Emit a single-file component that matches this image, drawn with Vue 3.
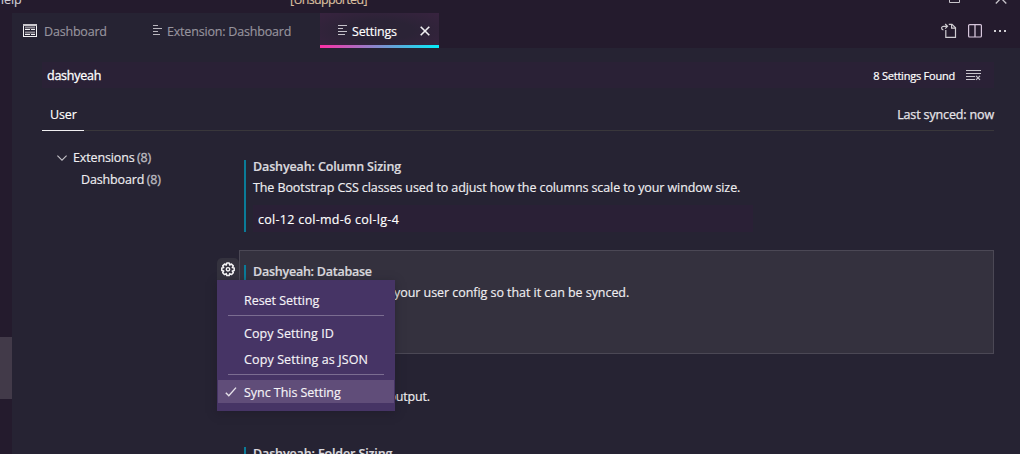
<script setup>
const tree = [
  { label: 'Extensions', count: '(8)', depth: 0 },
  { label: 'Dashboard', count: '(8)', depth: 1 },
]
</script>

<template>
  <div class="window">
    <header class="titlebar">
      <span class="help">Help</span>
      <span class="apptitle">[Unsupported]</span>
      <svg class="controls" width="70" height="13" viewBox="0 0 70 13" fill="none" stroke="#c8c5cb">
        <path d="M9.5 -5.5h10v8h-10z" />
        <path d="M55.8 3.5L66 -7M56 -7L66.3 3.5" stroke-width="1.3" />
      </svg>
    </header>
    <div class="body">
      <aside class="activity"><div class="marker"></div></aside>
      <main class="main">
        <nav class="tabs">
          <div class="tab t1">
            <svg width="14" height="13" viewBox="0 0 14 13">
              <rect x=".5" y=".5" width="13" height="12" fill="none" stroke="#f2f1f3" />
              <path d="M0 1h14" stroke="#cac8cd" stroke-width="2" />
              <path d="M2 3.5h10M2 8.5h10" stroke="#8d8a93" stroke-width="2" />
              <path d="M2 5.5h5M8 5.5h4M2 10.5h5M8 10.5h4" stroke="#f2f1f3" />
            </svg>
            <span>Dashboard</span>
          </div>
          <div class="tab t2">
            <svg class="lines" width="10" height="10" viewBox="0 0 10 10" stroke="#b9b6be" stroke-width="1.2">
              <path d="M1 .5h5M1 3.5h9M1 6.5h5M1 9.5h7" />
            </svg>
            <span>Extension: Dashboard</span>
          </div>
          <div class="tab t3">
            <svg class="lines" width="10" height="10" viewBox="0 0 10 10" stroke="#c5c2ca" stroke-width="1.2">
              <path d="M0 .5h9M0 3.5h5M0 6.5h9M0 9.5h7" />
            </svg>
            <span>Settings</span>
            <svg class="close" width="10" height="10" viewBox="0 0 10 10" stroke="#f0eff1" stroke-width="1.6">
              <path d="M.7 .7l8.6 8.6M9.3 .7L.7 9.3" />
            </svg>
          </div>
          <div class="actions">
            <svg width="16" height="16" viewBox="0 0 16 16" fill="none" stroke="#cfcdd2" stroke-width="1.2">
              <path d="M4.8 7v7.4h9.7V4.8L11 1.4H7.8" />
              <path d="M10.6 1.5v3.7h3.9" />
              <path d="M2.4 6.8C1 6.6 .6 5.8 .6 5s.8-1.7 2-1.7h3.6M4.2 1l2.3 2.3-2.3 2.3" />
            </svg>
            <svg class="split" width="14" height="14" viewBox="0 0 14 14" fill="none" stroke="#d6c6dc">
              <rect x=".6" y=".6" width="12.8" height="12.4" rx="1" stroke-width="1.2" /><path d="M7 .5v12.5" stroke-width="1.3" />
            </svg>
            <svg class="dots" width="14" height="4" viewBox="0 0 14 4" fill="#cfcdd2">
              <rect x="1" y="1" width="2" height="2" /><rect x="6" y="1" width="2" height="2" /><rect x="11" y="1" width="2" height="2" />
            </svg>
          </div>
        </nav>

        <div class="search">
          <span class="query">dashyeah</span>
          <span class="found">8 Settings Found</span>
          <svg width="15" height="12" viewBox="0 0 15 12" stroke="#c9c6cd" fill="none">
            <path d="M0 1.5h15M0 4.5h15M0 7.5h9M0 10.5h9" />
            <path d="M10 6.8l4 4M14 6.8l-4 4" stroke-width="1.2" />
          </svg>
        </div>

        <div class="scope">
          <span class="user">User</span>
          <span class="synced">Last synced: now</span>
        </div>

        <div class="content">
          <div class="tree">
            <div v-for="n in tree" :key="n.label" :class="['node', 'd' + n.depth]">
              <svg v-if="!n.depth" width="10" height="6" viewBox="0 0 10 6" fill="none" stroke="#c5c3c9" stroke-width="1.1">
                <path d="M.4 .6L5 5.2 9.6 .6" />
              </svg>
              <span>{{ n.label }}</span><b>{{ n.count }}</b>
            </div>
          </div>
          <div class="settings">
            <section class="item first">
              <div class="mod">
                <h3>Dashyeah: Column Sizing</h3>
                <p class="d1t">The Bootstrap CSS classes used to adjust how the columns scale to your window size.</p>
                <div class="field">col-12 col-md-6 col-lg-4</div>
              </div>
            </section>
            <section class="item focused">
              <div class="mod">
                <h3>Dashyeah: Database</h3>
                <p class="d2t">your user config so that it can be synced.</p>
              </div>
              <div class="gear">
                <svg width="16" height="16" viewBox="0 0 16 16" fill="none" stroke="#f5f4f6">
                  <path stroke-width="1.5" stroke-linejoin="round" d="M6.8 1.1h2.4l.5 1.9 1.7-1 1.9 1.9-1 1.7 1.9.5v2.4l-1.9.5 1 1.7-1.9 1.9-1.7-1-.5 1.9H6.8l-.5-1.9-1.7 1-1.9-1.9 1-1.7-1.9-.5V6.1l1.9-.5-1-1.7L4.6 2l1.7 1z" />
                  <circle cx="8" cy="7.3" r="1.7" stroke-width="1.4" />
                </svg>
              </div>
              <div class="menu">
                <div class="opt">Reset Setting</div>
                <hr />
                <div class="opt copyid">Copy Setting ID</div>
                <div class="opt json">Copy Setting as JSON</div>
                <hr />
                <div class="opt on">
                  <svg width="12" height="10" viewBox="0 0 12 10" fill="none" stroke="#e6e1ea" stroke-width="1.4"><path d="M.8 5.8l3 3L11 .6" /></svg>
                  <span>Sync This Setting</span>
                </div>
              </div>
            </section>
            <p class="d3t">output.</p>
            <section class="item last">
              <div class="mod"><h3>Dashyeah: Folder Sizing</h3></div>
            </section>
          </div>
        </div>
      </main>
    </div>
  </div>
</template>

<style>
html, body { margin: 0; background: #262333; overflow: hidden; }
</style>

<style scoped>
* { box-sizing: border-box; }
svg { display: block; flex: none; overflow: visible; }
h3, p { margin: 0; }
.window { width: 1020px; height: 454px; overflow: hidden; background: #262333; color: #efeef1; font: 12.5px/18px "Open Sans", "Noto Sans", sans-serif; letter-spacing: -.14px; -webkit-text-stroke: .15px; white-space: nowrap; display: flex; flex-direction: column; }
.titlebar { height: 13px; flex: none; background: #241b2d; display: flex; overflow: hidden; color: #cfccd3; }
.titlebar span { margin-top: -9px; }
.help { margin-left: -5px; width: 295px; }
.apptitle { color: #d9bf9f; letter-spacing: -.68px; width: 650px; }
.body { display: flex; flex: 1; min-height: 0; }
.activity { width: 12px; background: #241b2d; padding-top: 324px; }
.marker { height: 62px; background: #423a49; }
.main { flex: 1; min-width: 0; }
.tabs { height: 35px; display: flex; background: #241b2d; }
.tab { display: flex; align-items: center; background: #262333; color: #97949e; }
.tab span { margin-top: 2px; letter-spacing: -.19px; }
.t1 { width: 126px; padding-left: 11px; gap: 7px; }
.t1 svg { margin-top: -1px; }
.t2 { width: 182px; padding-left: 14px; gap: 5px; }
.lines { margin-top: -1px; }
.t3 { width: 119px; padding-left: 18px; gap: 4px; color: #fff; background: linear-gradient(90deg, #ff2ea6, #03edf9) bottom / 100% 3px no-repeat, radial-gradient(ellipse at center, #2b2336 40%, #38233f 100%); }
.close { margin-left: auto; margin-right: 9px; margin-top: 1px; }
.actions { margin-left: auto; display: flex; align-items: center; padding-right: 13px; }
.split { margin-left: 11px; }
.dots { margin-left: 11px; }
.search { margin: 14px 26px 0 30px; height: 26px; background: #2a2136; display: flex; align-items: center; padding: 0 13px 0 5px; color: #fff; }
.query { flex: 1; letter-spacing: -.24px; padding-top: 2px; -webkit-text-stroke: .3px; }
.found { font-size: 11px; letter-spacing: -.22px; margin-right: 11px; margin-top: 2px; -webkit-text-stroke: .2px; }
.scope { margin: 12px 26px 0 30px; height: 31px; border-bottom: 1px solid #39373b; display: flex; justify-content: space-between; line-height: 30px; }
.user { height: 31px; width: 42px; padding-left: 8px; border-bottom: 1px solid #f0eff1; color: #fff; }
.synced { color: #e6e4e9; -webkit-text-stroke: .25px; }
.content { display: flex; height: 323px; }
.tree { width: 227px; padding: 16px 0 0 45px; }
.node { display: flex; align-items: center; height: 22px; line-height: 22px; }
.node svg { margin-right: 6px; }
.node b { font-weight: 400; color: #b9b7be; margin-left: 2.5px; -webkit-text-stroke: .35px; }
.node.d1 { padding-left: 24px; }
.settings { width: 755px; }
.item { position: relative; padding-left: 5px; }
.mod { border-left: 2px solid #0a7b98; padding-left: 7px; }
h3 { font-size: 12.5px; line-height: 14px; font-weight: 600; color: #dad9de; letter-spacing: -.13px; -webkit-text-stroke: .2px; }
.first { padding-top: 29px; height: 119px; }
.first .mod { height: 72px; }
p { line-height: 18px; }
.d1t { margin-top: 5px; letter-spacing: -.095px; }
.field { margin-top: 8px; width: 500px; height: 27px; background: #2a2036; padding-left: 5px; line-height: 29px; color: #fff; letter-spacing: .28px; }
.focused { height: 104px; background: #34313e; border: 1px solid #4b4855; padding: 14px 0 0 4px; }
.focused .mod { height: 72px; }
.focused h3 { letter-spacing: -.24px; }
.d2t { margin: 5px 0 0 141px; letter-spacing: -.05px; }
.gear { position: absolute; left: -23px; top: 7px; width: 22px; height: 22px; border-radius: 5px 5px 0 0; background: #34323e; display: grid; place-items: center; padding-top: 1px; }
.menu { position: absolute; z-index: 2; left: -23px; top: 29px; width: 178px; height: 131px; background: #463465; box-shadow: 0 2px 8px #1b182580; padding: 8px 1px; color: #f5f3f7; letter-spacing: -.04px; }
.opt { height: 26px; line-height: 25px; padding-left: 26px; display: flex; }
.copyid { letter-spacing: .08px; }
.json { letter-spacing: .12px; }
hr { border: 0; height: 1px; background: #7b6d91; margin: 1px 10px 5px; }
.opt.on { height: 23px; line-height: 25px; background: #604d79; padding-left: 7px; align-items: center; gap: 7px; }
.opt.on span { padding-top: 1px; }
.d3t { margin: 34px 0 0 149.5px; letter-spacing: -.2px; }
.last { padding-top: 41px; }
.last .mod { height: 72px; }
</style>
